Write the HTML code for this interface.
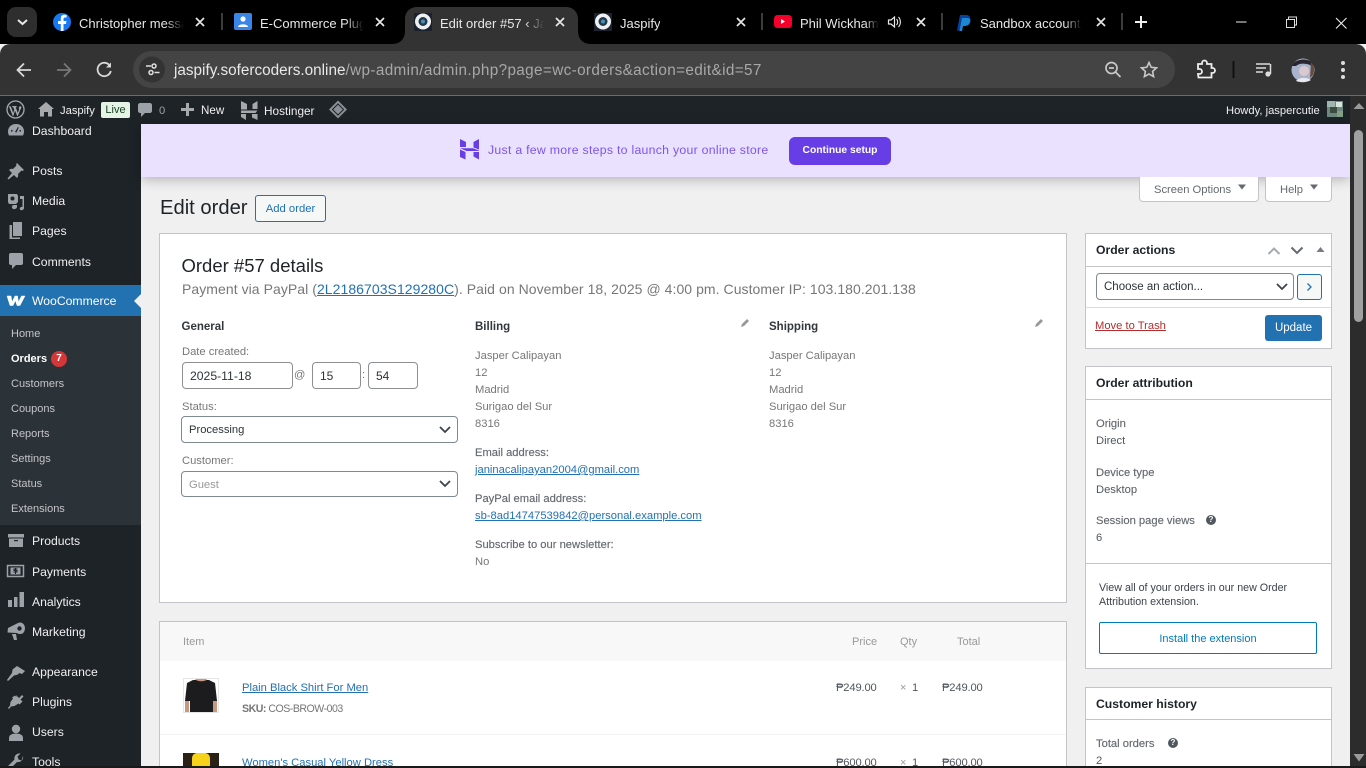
<!DOCTYPE html>
<html lang="en"><head><meta charset="utf-8"><title>Edit order #57</title>
<style>
*{box-sizing:border-box}
html,body{margin:0;padding:0;width:1366px;height:768px;overflow:hidden;background:#f0f0f1;font-family:"Liberation Sans",sans-serif;font-size:12px;color:#50575e}
#page{position:relative;width:1366px;height:768px;overflow:hidden;background:#f0f0f1}
.a{position:absolute}
.t{position:absolute;white-space:nowrap;line-height:16px;height:16px}
svg{position:absolute;overflow:visible}
#tabs{left:0;top:0;width:1366px;height:44px;background:#000}
#tool{left:0;top:44px;width:1366px;height:52px;background:#333;border-radius:10px 10px 0 0;border-bottom:1px solid #6b6b6b}
#omni{left:133px;top:51px;width:1042px;height:37px;border-radius:19px;background:#444}
.tab{color:#e8e8e8;font-size:13px;top:16px;overflow:hidden}
.tab.f{-webkit-mask-image:linear-gradient(90deg,#000 82%,transparent);mask-image:linear-gradient(90deg,#000 82%,transparent)}
.sep{position:absolute;top:13px;width:2px;height:17px;background:#3c3c3c}
#bar{left:0;top:96px;width:1350px;height:28px;background:#1d2327;color:#f0f0f1;font-size:11.5px}
#side{left:0;top:124px;width:141px;height:642px;background:#1d2327;overflow:hidden}
.m{color:#f0f0f1;left:32px;font-size:12.2px}
#sub{left:0;top:192px;width:141px;height:209px;background:#2c3338}
.s{color:#c3c4c7;left:11px;font-size:11px;margin-top:1px}
.i{fill:#9ca2a7}
#banner{left:141px;top:124px;width:1209px;height:53px;background:#e9e1ff;box-shadow:0 2px 12px rgba(0,0,0,.28)}
.box{position:absolute;background:#fff;border:1px solid #c3c4c7}
.l{font-size:11.2px;color:#777;margin-top:1px}
.d{font-size:11.2px;color:#50575e;margin-top:1px}
.b{font-size:11.5px;color:#32373c;font-weight:bold;margin-top:1px}
.sb{font-size:11.2px;color:#646970;-webkit-text-stroke:.15px #646970;margin-top:1px}
.lk{font-size:11.2px;color:#2271b1;text-decoration:underline;margin-top:1px}
.inp{position:absolute;background:#fff;border:1px solid #8c8f94;border-radius:4px;color:#2c3338;font-size:12px;line-height:27px;padding-left:7px;height:27px}
.hd{font-size:12.2px;font-weight:bold;color:#1d2327;left:1096px}
.hl{position:absolute;left:1086px;width:245px;height:1px;background:#c3c4c7}
.ch{fill:none;stroke:#646970;stroke-width:2}
#scroll{left:1350px;top:96px;width:16px;height:670px;background:#2c2c2c}
#foot{left:0;top:766px;width:1366px;height:2px;background:#1a1a1a}
.bt{font-size:11.2px;color:#f0f0f1;top:103px}
.hh{font-size:11px;color:#999;top:634px}
</style></head><body>
<div id="page">

<div id="tabs" class="a"></div>
<div id="tool" class="a"></div>
<div id="omni" class="a"></div>

<!-- tab strip -->
<div class="a" style="left:7px;top:7px;width:30px;height:30px;background:#2e2e2e;border-radius:9px"></div>
<svg style="left:0;top:0" width="1366" height="96" viewBox="0 0 1366 96">
 <path d="M18 20l4.500 4 4.500-4" fill="none" stroke="#e8e8e8" stroke-width="2"/>
 <!-- active tab -->
 <path d="M392 44c8 0 13-5 13-13V19c0-7 5-12 12-12h149c7 0 12 5 12 12v12c0 8 5 13 13 13z" fill="#333"/>
 <!-- facebook -->
 <circle cx="62" cy="22" r="9" fill="#1877f2"/>
 <path d="M63.500 31v-7h2.500l.5-3h-3v-2c0-1 .4-1.500 1.600-1.500h1.500V15c-2.800-.5-5.800-.3-5.800 3.400V21H58v3h2.800v7z" fill="#fff"/>
 <!-- ecommerce contact -->
 <rect x="234" y="13" width="18" height="17" rx="2" fill="#3a86e8"/>
 <circle cx="243" cy="19" r="2.600" fill="#fff"/><path d="M238 27c0-3.500 10-3.500 10 0z" fill="#fff"/>
 <!-- site icons -->
 <rect x="414" y="13" width="18" height="18" fill="#1a2230"/><circle cx="423" cy="21.500" r="8" fill="#eef0f2"/><circle cx="423" cy="21.500" r="4.500" fill="#23384a"/><circle cx="423" cy="21.500" r="2" fill="#4a8fb5"/>
 <rect x="594" y="13" width="18" height="18" fill="#1a2230"/><circle cx="603" cy="21.500" r="8" fill="#eef0f2"/><circle cx="603" cy="21.500" r="4.500" fill="#23384a"/><circle cx="603" cy="21.500" r="2" fill="#4a8fb5"/>
 <!-- youtube -->
 <rect x="774" y="15" width="18" height="13" rx="3.500" fill="#f4002a"/><path d="M781 19v5l4-2.500z" fill="#fff"/>
 <!-- speaker -->
 <path d="M888.500 20h2.500l3.500-3v10l-3.500-3h-2.500z" fill="none" stroke="#e8e8e8" stroke-width="1.200"/><path d="M896.500 19c1.500 1.500 1.500 4.500 0 6M898.500 17c2.500 2.800 2.500 7.200 0 10" fill="none" stroke="#e8e8e8" stroke-width="1.100"/>
 <!-- paypal -->
 <path d="M960 15h6c4 0 5 3 4 6-1 2.500-3 3.500-6 3.500h-2l-1 6h-4z" fill="#0b3f9c"/><path d="M962 18h5c3 0 4 2 3 4.500-1 2.500-3 3.500-5.500 3.500H963l-1 5h-2.500z" fill="#1b88d6"/>
 <!-- close x's -->
 <g fill="none" stroke="#e8e8e8" stroke-width="1.700">
  <path d="M196 18l8 8M204 18l-8 8M376 18l8 8M384 18l-8 8M556 18l8 8M564 18l-8 8M737 18l8 8M745 18l-8 8M917 18l8 8M925 18l-8 8M1097 18l8 8M1105 18l-8 8"/>
 </g>
 <path d="M1141 16v12M1135 22h12" stroke="#eee" stroke-width="2" fill="none"/>
 <!-- window controls -->
 <path d="M1236 22h10.500" stroke="#eee" stroke-width="1" fill="none"/>
 <path d="M1286.500 19.500h8v8h-8zM1288.500 19v-2h8v8h-1.500" stroke="#ddd" stroke-width="1" fill="none"/>
 <path d="M1336 18l10.500 10.500M1346.500 18L1336 28.500" stroke="#eee" stroke-width="1.100" fill="none"/>
 <!-- nav -->
 <path d="M31 70H18M24 63.500L17.500 70l6.500 6.500" fill="none" stroke="#d8d8d8" stroke-width="1.800"/>
 <path d="M57 70h13M64 63.500l6.500 6.500-6.500 6.500" fill="none" stroke="#777" stroke-width="1.800"/>
 <path d="M110 66a6.700 6.700 0 1 0 .8 5" fill="none" stroke="#d8d8d8" stroke-width="1.800"/><path d="M111 62.500v5h-5z" fill="#d8d8d8"/>
 <circle cx="152" cy="69.500" r="13" fill="#333"/>
 <g fill="none" stroke="#e0e0e0" stroke-width="1.500"><path d="M146 66h5M154.500 72.500h5"/><circle cx="154" cy="66" r="2"/><circle cx="151" cy="72.500" r="2"/></g>
 <!-- right icons -->
 <g fill="none" stroke="#c8c8c8" stroke-width="1.700"><circle cx="1111.500" cy="68" r="5.500"/><path d="M1115.500 72l5 5M1109 68h5"/></g>
 <path d="M1149 62.500l2.200 4.800 5.300.6-3.900 3.500 1 5.200-4.600-2.600-4.600 2.600 1-5.200-3.900-3.500 5.300-.6z" fill="none" stroke="#c8c8c8" stroke-width="1.600"/>
 <path d="M1198 64h4v-1a2.500 2.500 0 0 1 5 0v1h4.500v4h1a2.500 2.500 0 0 1 0 5h-1v4.500h-13l-.5-3.500h1.500a2.500 2.500 0 0 0 0-5H1198z" fill="none" stroke="#eee" stroke-width="1.800"/>
 <rect x="1232.500" y="61" width="2" height="17" fill="#111"/>
 <path d="M1256 64h14M1256 68h10M1256 72h7" stroke="#ddd" stroke-width="1.500" fill="none"/><path d="M1270.500 64v10" stroke="#ddd" stroke-width="1.500"/><circle cx="1268" cy="74" r="2.600" fill="#ddd"/>
 <circle cx="1303" cy="70" r="11.500" fill="#a9b4cc"/><path d="M1292 66c2-7 15-9 21-3l1 6-4-4c-5-2-11-2-14 1z" fill="#2a2530"/><path d="M1311 62c3 3 4 9 2 13l-3 3z" fill="#6b4a3c"/><circle cx="1304" cy="71" r="5" fill="#d9c9cf"/><path d="M1296 81c3-4 11-4 15-1-4 2.500-10 3-15 1z" fill="#e8e8ee"/>
 <circle cx="1343" cy="63" r="2" fill="#ddd"/><circle cx="1343" cy="70" r="2" fill="#ddd"/><circle cx="1343" cy="77" r="2" fill="#ddd"/>
</svg>
<span class="sep" style="left:221px"></span><span class="sep" style="left:761px"></span><span class="sep" style="left:941px"></span><span class="sep" style="left:1121px"></span>
<span class="t tab f" style="left:79px;width:105px">Christopher messages</span>
<span class="t tab f" style="left:260px;width:104px">E-Commerce Plugins</span>
<span class="t tab f" style="left:440px;width:104px">Edit order #57 ‹ Jaspify</span>
<span class="t tab" style="left:620px">Jaspify</span>
<span class="t tab f" style="left:800px;width:79px">Phil Wickham</span>
<span class="t tab f" style="left:980px;width:102px">Sandbox accounts</span>
<span class="t" style="left:174px;top:63px;font-size:15.3px;color:#e8e8e8">jaspify.sofercoders.online<span style="color:#a8a8a8;letter-spacing:.36px">/wp-admin/admin.php?page=wc-orders&amp;action=edit&amp;id=57</span></span>

<!-- side menu -->
<div id="side" class="a">
 <div id="sub" class="a"></div>
 <div class="a" style="left:0;top:161px;width:141px;height:31px;background:#2271b1"></div>
 <svg style="left:0;top:0" width="141" height="642" viewBox="0 124 141 642">
  <path d="M134 301l7-7v14z" fill="#f0f0f1"/>
  <!-- dashboard -->
  <path class="i" d="M16 124c-5 0-8 3.500-8 7.500 0 1.500.4 2.800 1 4h14c.6-1.200 1-2.500 1-4 0-4-3-7.500-8-7.500z"/>
  <path d="M11 130h1.500v1.500H11zM19.500 130H21v1.500h-1.500zM15 132l3-5 .8.5-2.300 5z" fill="#1d2327"/>
  <!-- posts pin -->
  <path class="i" d="M17 163l7 7-1.500 1-1-.5-3.500 3.500c.5 1.500 0 3-1 4l-3-3-5.500 4.500-1-1 4.500-5.500-3-3c1-1 2.500-1.500 4-1l3.500-3.500-.5-1z"/>
  <!-- media -->
  <path class="i" d="M8 194h9l1 2v6l-2 2H9l-1-2zM20 196h4v12c0 2-3 3-4 1.500s1-3 2.500-2.500v-8H20zM11 205h6v2c0 1.500-3 3-4.500 1.500s0-3 1.500-2.500z"/>
  <circle cx="12.500" cy="198.500" r="2" fill="#1d2327"/>
  <!-- pages -->
  <path class="i" d="M13 222h9v14h-9z"/><path class="i" d="M9.500 225h2.500v12.500h8v1.500H9.500z"/>
  <!-- comments -->
  <path class="i" d="M11 253h10c1.500 0 2 1 2 2v8c0 1-.5 2-2 2h-5l-4 4v-4h-1c-1.500 0-2-1-2-2v-8c0-1 .5-2 2-2z"/>
  <!-- woo -->
  <path d="M7 296h4l1 6 3-6h2.500l1 6 3-6h3.500l-5 9.500h-3l-1.500-5-2.500 5h-3z" fill="#fff" stroke="#fff" stroke-width=".5"/>
  <!-- products -->
  <path class="i" d="M8 534h16v3.500H8z"/><path class="i" d="M9 538.500h14V547H9z"/><rect x="14" y="540" width="4" height="1.200" fill="#1d2327"/>
  <!-- payments -->
  <rect x="7.500" y="565.500" width="16" height="11" fill="none" stroke="#9ca2a7" stroke-width="1.500"/><rect x="10.500" y="567.500" width="10" height="7" fill="#9ca2a7"/>
  <path d="M17.500 569h-3.500v1.500h3v1.500h-3.500M15.500 568v6" fill="none" stroke="#1d2327" stroke-width="1"/>
  <!-- analytics -->
  <path class="i" d="M8 600h4v7H8zM14 597h3.500v10H14zM19.500 592H24v15h-4.500z"/>
  <!-- marketing -->
  <path class="i" d="M8 628l10-5c2-1 4-.5 5.500 1 2.500 3 1.500 8-1 9.500-2 1-4 .5-6-.5l-9-.5zM12 634h4l1 6h-3z"/><circle cx="19.500" cy="628.500" r="2.200" fill="#1d2327"/>
  <!-- appearance -->
  <path class="i" d="M17 666l8 5-3 3-3-1-1 1.500-4 1-6 5.500-1-1 5-7 .5-3.500z"/>
  <!-- plugins -->
  <path class="i" d="M16 695l3 3 3-3 1.500 1.500-3 3 2 2-3 3-1-1-4 2.500-3.500.5-2 2.500-1-1 2-2.500.5-3.500 2.500-3.500-1-1 3-2 1.500 1.500z"/>
  <!-- users -->
  <circle class="i" cx="16" cy="729" r="4.200"/><path class="i" d="M9 741v-3c0-3 3-4.500 7-4.500s7 1.500 7 4.500v3z"/>
  <!-- tools -->
  <path class="i" d="M23 756a5 5 0 0 1-6 6L11 768H8.500v-2.500l6-6a5 5 0 0 1 6-6l-3 3 1 3 3 1z"/>
 </svg>
</div>
<span class="t m" style="top:123px">Dashboard</span>
<span class="t m" style="top:163px">Posts</span>
<span class="t m" style="top:193px">Media</span>
<span class="t m" style="top:223px">Pages</span>
<span class="t m" style="top:254px">Comments</span>
<span class="t m" style="top:293px;color:#fff">WooCommerce</span>
<span class="t s" style="top:325px">Home</span>
<span class="t s" style="top:350px;color:#fff;font-weight:bold">Orders</span>
<span class="a" style="left:51px;top:351px;width:16px;height:16px;border-radius:8px;background:#d63638;color:#fff;font-size:10px;font-weight:bold;text-align:center;line-height:16px">7</span>
<span class="t s" style="top:375px">Customers</span>
<span class="t s" style="top:400px">Coupons</span>
<span class="t s" style="top:425px">Reports</span>
<span class="t s" style="top:450px">Settings</span>
<span class="t s" style="top:475px">Status</span>
<span class="t s" style="top:500px">Extensions</span>
<span class="t m" style="top:533px">Products</span>
<span class="t m" style="top:564px">Payments</span>
<span class="t m" style="top:594px">Analytics</span>
<span class="t m" style="top:624px">Marketing</span>
<span class="t m" style="top:664px">Appearance</span>
<span class="t m" style="top:694px">Plugins</span>
<span class="t m" style="top:724px">Users</span>
<span class="t m" style="top:754px">Tools</span>

<!-- admin bar -->
<div id="bar" class="a"></div>
<svg style="left:0;top:96px" width="1350" height="28" viewBox="0 96 1350 28">
 <circle cx="15.500" cy="109.500" r="8.500" fill="none" stroke="#a7aaad" stroke-width="1.300"/>
 <path d="M9 106l4 10 2-6 2.500 6 3.800-9c-1-.8-2-.5-2.300.5 0 .7.300 1.500.5 2l-1.800 4-2.300-6.500h1.100l-.1-.7h-4l.1.700h1l1 2.800-1.300 3.800-2.500-6.800h-1.200z" fill="#a7aaad" stroke="#a7aaad" stroke-width=".5"/>
 <path d="M46 102l8 7h-2v7.500h-4v-4.500h-4v4.500h-4V109h-2z" fill="#a7aaad"/>
 <path d="M140 103h10c1 0 2 1 2 2v6c0 1-1 2-2 2h-5l-4 4v-4h-1c-1 0-2-1-2-2v-6c0-1 1-2 2-2z" fill="#9ca2a7"/>
 <path d="M187.500 103v13M181 109.500h13" stroke="#a7aaad" stroke-width="3" fill="none"/>
 <path d="M241 101l6 3v5.500h-6zM257.500 101v8h-5v-5zM241 110.500h16.500l-2 2.500H241zM241 114l5 0v6l-5-3zM252 114h5.500v6l-5.500-2.500z" fill="#a7aaad"/>
 <path d="M338 100.500l9 9-9 9-9-9z" fill="#8a9096"/><path d="M338 104l5.500 5.500-5.500 5.500-5.500-5.500z" fill="none" stroke="#1d2327" stroke-width="1"/>
 <rect x="1327" y="101" width="16" height="16" fill="#6e8a80"/><rect x="1327" y="101" width="8" height="6" fill="#9db5ae"/><rect x="1336" y="102" width="6" height="5" fill="#d9e4dc"/><rect x="1330" y="107" width="7" height="6" fill="#3c4a40"/><rect x="1337" y="111" width="6" height="6" fill="#86a088"/>
</svg>
<span class="t bt" style="left:60px">Jaspify</span>
<span class="a" style="left:101px;top:102px;width:29px;height:16px;background:#e6f4e8;border-radius:2px;color:#14431d;font-size:11px;text-align:center;line-height:16px">Live</span>
<span class="t bt" style="left:159px;color:#9ca2a7">0</span>
<span class="t bt" style="left:201px;font-size:11.6px">New</span>
<span class="t bt" style="left:264px;font-size:11.8px">Hostinger</span>
<span class="t bt" style="left:1226px">Howdy, jaspercutie</span>

<!-- banner -->
<div id="banner" class="a"></div>
<svg style="left:460px;top:139px" width="20" height="21" viewBox="0 0 20 21">
 <path d="M0 0l6 3v5H0zM13.500 3L19 0v10.500l-5.500-2zM0 9.200h13l6 2.300v.5H6.500zM0 10.500l5.500 2.500v7.500L0 18zM13.500 13H19v7.500l-5.500-3z" fill="#673de6"/>
</svg>
<span class="t" style="left:488px;top:142px;font-size:12.300px;color:#7d55ec;letter-spacing:.27px">Just a few more steps to launch your online store</span>
<div class="a" style="left:789px;top:137px;width:102px;height:28px;background:#673de6;border-radius:6px;color:#fff;font-size:10.300px;font-weight:bold;text-align:center;line-height:28px">Continue setup</div>

<!-- screen options -->
<div class="a" style="left:1139px;top:177px;width:120px;height:25px;background:#fff;border:1px solid #c3c4c7;border-top:0;border-radius:0 0 4px 4px"></div>
<div class="a" style="left:1265px;top:177px;width:67px;height:25px;background:#fff;border:1px solid #c3c4c7;border-top:0;border-radius:0 0 4px 4px"></div>
<span class="t" style="left:1154px;top:182px;font-size:11.200px;color:#646970">Screen Options</span>
<span class="t" style="left:1280px;top:182px;font-size:11.200px;color:#646970">Help</span>
<svg style="left:0;top:0" width="1366" height="768" viewBox="0 0 1366 768"><path d="M1238 184.500h8l-4 5zM1310 184.500h8l-4 5z" fill="#646970"/></svg>

<span class="t" style="left:160px;top:200px;font-size:20.200px;color:#1d2327">Edit order</span>
<div class="a" style="left:255px;top:195px;width:71px;height:27px;background:#f6f7f7;border:1px solid #2271b1;border-radius:3px;color:#2271b1;font-size:11.300px;text-align:center;line-height:27px">Add order</div>

<!-- order details -->
<div class="box" style="left:159px;top:233px;width:908px;height:370px"></div>
<span class="t" style="left:181.500px;top:258px;font-size:18.500px;color:#1d2327">Order #57 details</span>
<span class="t" style="left:182px;top:281px;font-size:14px;color:#777;letter-spacing:.056px">Payment via PayPal (<span style="color:#2271b1;text-decoration:underline">2L2186703S129280C</span>). Paid on November 18, 2025 @ 4:00 pm. Customer IP: 103.180.201.138</span>
<span class="t b" style="left:181.500px;top:318px">General</span>
<span class="t b" style="left:475px;top:318px">Billing</span>
<span class="t b" style="left:769px;top:318px">Shipping</span>
<span class="t l" style="left:182px;top:343px">Date created:</span>
<div class="inp" style="left:182px;top:362px;width:111px;font-size:12.200px">2025-11-18</div>
<span class="t l" style="left:294px;top:366px">@</span>
<div class="inp" style="left:312px;top:362px;width:49px">15</div>
<span class="t l" style="left:362px;top:366px">:</span>
<div class="inp" style="left:368px;top:362px;width:50px">54</div>
<span class="t l" style="left:182px;top:398px">Status:</span>
<div class="inp" style="left:181px;top:416px;width:277px;border-color:#7e8993;font-size:11.200px">Processing</div>
<span class="t l" style="left:182px;top:452px">Customer:</span>
<div class="inp" style="left:181px;top:471px;width:277px;height:26px;border-color:#7e8993;font-size:11.200px;color:#999">Guest</div>
<svg style="left:0;top:0" width="1366" height="768" viewBox="0 0 1366 768">
 <path d="M741 327l1-3 5-5 2 2-5 5zM1035 327l1-3 5-5 2 2-5 5z" fill="#999"/>
 <path d="M440 427l5 5 5-5M440 481l5 5 5-5" fill="none" stroke="#3c434a" stroke-width="1.800"/>
</svg>

<span class="t l" style="left:475px;top:347px">Jasper Calipayan</span>
<span class="t l" style="left:475px;top:364px">12</span>
<span class="t l" style="left:475px;top:381px">Madrid</span>
<span class="t l" style="left:475px;top:398px">Surigao del Sur</span>
<span class="t l" style="left:475px;top:415px">8316</span>
<span class="t sb" style="left:475px;top:444px">Email address:</span>
<span class="t lk" style="left:475px;top:461px">janinacalipayan2004@gmail.com</span>
<span class="t sb" style="left:475px;top:490px">PayPal email address:</span>
<span class="t lk" style="left:475px;top:507px">sb-8ad14747539842@personal.example.com</span>
<span class="t sb" style="left:475px;top:536px">Subscribe to our newsletter:</span>
<span class="t l" style="left:475px;top:553px">No</span>

<span class="t l" style="left:769px;top:347px">Jasper Calipayan</span>
<span class="t l" style="left:769px;top:364px">12</span>
<span class="t l" style="left:769px;top:381px">Madrid</span>
<span class="t l" style="left:769px;top:398px">Surigao del Sur</span>
<span class="t l" style="left:769px;top:415px">8316</span>

<!-- items -->
<div class="box" style="left:159px;top:621px;width:908px;height:160px"></div>
<div class="a" style="left:160px;top:622px;width:906px;height:39px;background:#f8f8f8"></div>
<div class="a" style="left:160px;top:734px;width:906px;height:1px;background:#f3f3f3"></div>
<span class="t hh" style="left:183px">Item</span>
<span class="t hh" style="left:852px">Price</span>
<span class="t hh" style="left:900px">Qty</span>
<span class="t hh" style="left:957px">Total</span>
<div class="a" style="left:183px;top:678px;width:36px;height:35px;background:#fff;border:1px solid #e6e6e6"></div>
<svg style="left:184px;top:679px" width="34" height="33" viewBox="0 0 34 33">
 <path d="M1 21h4v12H1zM29 21h4v12h-4z" fill="#c99880"/>
 <path d="M9 1h16l6 3 2 18h-4v11H6V22H1L3 4z" fill="#1c1c1e"/>
 <path d="M11 0h12c-1 3-10 3-12 0z" fill="#c99880"/>
</svg>
<span class="t lk" style="left:242px;top:679px">Plain Black Shirt For Men</span>
<span class="t" style="left:242px;top:700px;font-size:10.600px;letter-spacing:-.5px;margin-top:1px;color:#777"><b style="color:#777">SKU:</b> COS-BROW-003</span>
<span class="t d" style="left:836px;top:679px;letter-spacing:-.15px">₱249.00</span>
<span class="t" style="left:900px;top:680px;font-size:11px;color:#999">×</span>
<span class="t d" style="left:912px;top:679px">1</span>
<span class="t d" style="left:942px;top:679px;letter-spacing:-.15px">₱249.00</span>
<div class="a" style="left:183px;top:753px;width:36px;height:13px;background:#2a2015;overflow:hidden"><div class="a" style="left:9px;top:0;width:18px;height:13px;background:#f6d21b;border-radius:5px 5px 0 0"></div></div>
<span class="t lk" style="left:242px;top:754px">Women's Casual Yellow Dress</span>
<span class="t d" style="left:836px;top:754px;letter-spacing:-.15px">₱600.00</span>
<span class="t" style="left:900px;top:755px;font-size:11px;color:#999">×</span>
<span class="t d" style="left:912px;top:754px">1</span>
<span class="t d" style="left:942px;top:754px;letter-spacing:-.15px">₱600.00</span>

<!-- right column -->
<div class="box" style="left:1085px;top:233px;width:247px;height:116px"></div>
<div class="hl" style="top:266px"></div>
<div class="hl" style="top:307px;background:#dcdcde"></div>
<span class="t hd" style="top:242px">Order actions</span>
<svg style="left:0;top:0" width="1366" height="768" viewBox="0 0 1366 768">
 <path d="M1268.500 254l5.500-5.500 5.500 5.500" fill="none" stroke="#a7aaad" stroke-width="2"/>
 <path d="M1291.500 247.500l5.500 5.500 5.500-5.500M1291.500 380.500l5.500 5.500 5.500-5.500M1291.500 701.500l5.500 5.500 5.500-5.500" class="ch"/>
 <path d="M1268.500 387l5.500-5.500 5.500 5.500M1268.500 708l5.500-5.500 5.500 5.500" class="ch"/>
 <path d="M1316.500 252l4-5 4 5zM1316.500 385l4-5 4 5zM1316.500 706l4-5 4 5z" fill="#787c82"/>
</svg>
<div class="inp" style="left:1096px;top:273px;width:198px;font-size:11.500px;border-color:#7e8993">Choose an action...</div>
<svg style="left:0;top:0" width="1366" height="768" viewBox="0 0 1366 768"><path d="M1277 284l5 5 5-5" fill="none" stroke="#3c434a" stroke-width="1.800"/></svg>
<div class="a" style="left:1297px;top:274px;width:25px;height:26px;background:#f6f7f7;border:1px solid #2271b1;border-radius:3px"></div>
<svg style="left:0;top:0" width="1366" height="768" viewBox="0 0 1366 768"><path d="M1307.500 283.500l3.500 3.500-3.500 3.500" fill="none" stroke="#2271b1" stroke-width="1.300"/></svg>
<span class="t" style="left:1095px;top:318px;font-size:11.200px;color:#b32d2e;text-decoration:underline">Move to Trash</span>
<div class="a" style="left:1265px;top:315px;width:57px;height:26px;background:#2271b1;border-radius:3px;color:#fff;font-size:11.500px;text-align:center;line-height:27px">Update</div>

<div class="box" style="left:1085px;top:366px;width:247px;height:303px"></div>
<div class="hl" style="top:399px"></div>
<span class="t hd" style="top:375px">Order attribution</span>
<span class="t sb" style="left:1096px;top:415px">Origin</span>
<span class="t d" style="left:1096px;top:432px">Direct</span>
<span class="t sb" style="left:1096px;top:464px">Device type</span>
<span class="t d" style="left:1096px;top:481px">Desktop</span>
<span class="t sb" style="left:1096px;top:512px">Session page views</span>
<span class="a" style="left:1206px;top:515px;width:10px;height:10px;border-radius:5px;background:#50575e;color:#fff;font-size:8px;font-weight:bold;line-height:10px;text-align:center">?</span>
<span class="t d" style="left:1096px;top:529px">6</span>
<div class="hl" style="top:563px"></div>
<span class="t" style="left:1099px;top:580px;font-size:10.700px;color:#3c434a">View all of your orders in our new Order</span>
<span class="t" style="left:1099px;top:594px;font-size:10.700px;color:#3c434a">Attribution extension.</span>
<div class="a" style="left:1099px;top:622px;width:218px;height:32px;background:#fff;border:1px solid #007cba;border-radius:2px;color:#007cba;font-size:11px;text-align:center;line-height:32px">Install the extension</div>

<div class="box" style="left:1085px;top:687px;width:247px;height:100px"></div>
<div class="hl" style="top:719px"></div>
<span class="t hd" style="top:696px">Customer history</span>
<span class="t sb" style="left:1096px;top:735px">Total orders</span>
<span class="a" style="left:1168px;top:738px;width:10px;height:10px;border-radius:5px;background:#50575e;color:#fff;font-size:8px;font-weight:bold;line-height:10px;text-align:center">?</span>
<span class="t d" style="left:1096px;top:752px">2</span>

<!-- scrollbar -->
<div id="scroll" class="a"></div>
<div class="a" style="left:1354px;top:130px;width:9px;height:192px;background:#a0a0a0;border-radius:5px"></div>
<svg style="left:0;top:0" width="1366" height="768" viewBox="0 0 1366 768"><path d="M1353.500 109l5.500-6 5.500 6zM1353.500 754l5.500 7.500 5.500-7.500z" fill="#9a9a9a"/></svg>
<div id="foot" class="a"></div>
</div>
</body></html>
